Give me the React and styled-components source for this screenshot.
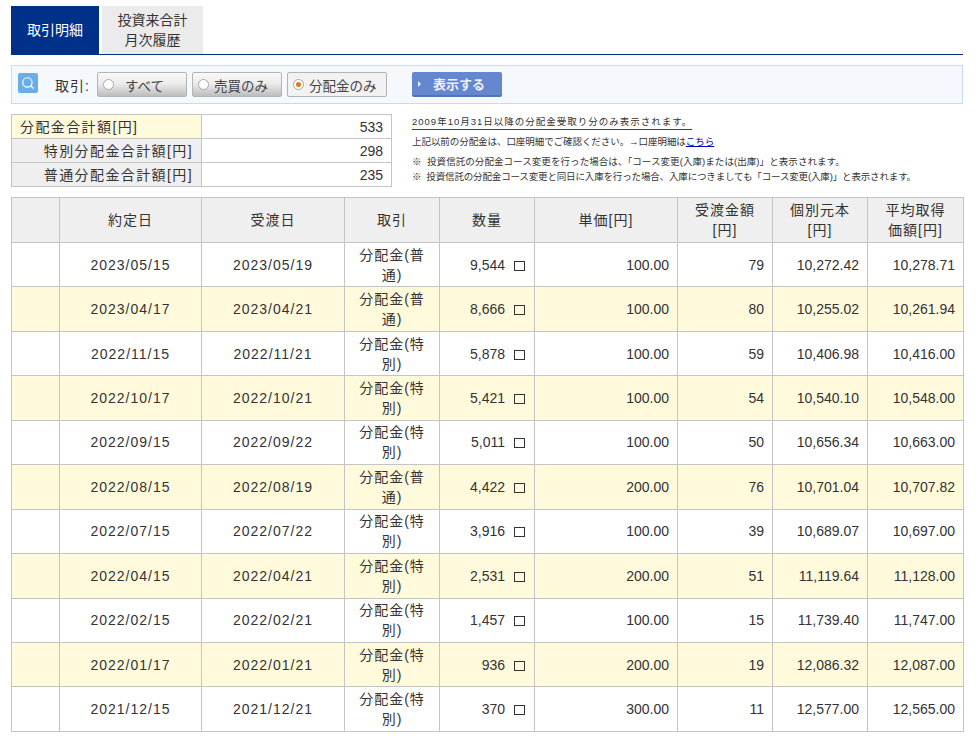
import styled, { createGlobalStyle } from "styled-components";
import { Search } from "lucide-react";

const Global = createGlobalStyle`
  html, body { margin: 0; padding: 0; background: #fff; }
  body {
    font-family: "Liberation Sans", "Noto Sans CJK JP", sans-serif;
    font-size: 14px;
    color: #333;
    overflow: hidden;
  }
`;

const Page = styled.div`
  width: 952px;
  padding: 6px 14px 0 11px;
`;

const Tabs = styled.div`
  display: flex;
  gap: 3px;
  height: 48px;
  border-bottom: 1px solid #00318a;
`;

const Tab = styled.div`
  width: ${(p) => p.$w}px;
  display: flex;
  align-items: center;
  justify-content: center;
  text-align: center;
  line-height: 20px;
  font-size: 14px;
  background: ${(p) => (p.$active ? "#00318a" : "#ebebeb")};
  color: ${(p) => (p.$active ? "#fff" : "#333")};
`;

const SearchBar = styled.div`
  box-sizing: border-box;
  height: 39px;
  margin-top: 10px;
  display: flex;
  align-items: center;
  padding: 0 6px;
  background: #f5f9fd;
  border: 1px solid #c6dcee;
`;

const IconBox = styled.div`
  width: 20px;
  height: 20px;
  margin-top: -4px;
  border-radius: 2px;
  background: #6aaee8;
  display: flex;
  align-items: center;
  justify-content: center;
  color: #fff;
`;

const BarLabel = styled.span`
  margin-left: 17px;
  margin-right: 7px;
  letter-spacing: 1px;
  white-space: nowrap;
`;

const Choice = styled.div`
  box-sizing: border-box;
  width: ${(p) => p.$w}px;
  height: 25px;
  margin-right: 5px;
  display: flex;
  align-items: center;
  padding-left: 5px;
  font-size: 13.5px;
  color: #444;
  border: 1px solid #b4b4b4;
  border-radius: 2px;
  background: ${(p) =>
    p.$on ? "#f2f2f2" : "linear-gradient(#f8f8f8 0%, #ececec 45%, #bdbdbd 100%)"};
`;

const Radio = styled.span`
  box-sizing: border-box;
  width: 11px;
  height: 11px;
  border-radius: 50%;
  border: 1px solid #a8a8a8;
  background: #fff;
  margin-right: ${(p) => p.$gap}px;
  flex: none;
  display: flex;
  align-items: center;
  justify-content: center;
  &::after {
    content: "";
    display: ${(p) => (p.$on ? "block" : "none")};
    width: 5px;
    height: 5px;
    border-radius: 50%;
    background: #e07b10;
  }
`;

const ShowButton = styled.div`
  box-sizing: border-box;
  width: 90px;
  height: 25px;
  margin-left: 20px;
  display: flex;
  align-items: center;
  padding-left: 6px;
  gap: 12px;
  border-radius: 2px;
  background: #6487cf;
  border-bottom: 2px solid #5574b4;
  color: #eef2fb;
  font-size: 13px;
  font-weight: 700;
  &::before {
    content: "";
    border-left: 3px solid #eef2fb;
    border-top: 3px solid transparent;
    border-bottom: 3px solid transparent;
  }
`;

const Summary = styled.div`
  display: flex;
  margin-top: 10px;
  height: 83px;
`;

const TotalsTable = styled.table`
  width: 381px;
  height: 73px;
  border-collapse: collapse;
  table-layout: fixed;
  td {
    border: 1px solid #c4c4c4;
    padding: 0 8px;
    line-height: 16px;
  }
`;

const TotalLabel = styled.td`
  width: 173px;
  letter-spacing: 1.4px;
  white-space: nowrap;
  text-align: ${(p) => (p.$main ? "left" : "right")};
  background: ${(p) => (p.$main ? "#fffadc" : "#efefef")};
`;

const TotalValue = styled.td`
  text-align: right;
`;

const Notes = styled.div`
  margin-left: 20px;
  font-size: 9.5px;
  line-height: 14px;
  padding-top: 1px;
`;

const Lead = styled.div`
  display: inline-block;
  border-bottom: 1px solid #d80000;
  margin-bottom: 5px;
  letter-spacing: 1px;
`;

const NoteLine = styled.div`
  margin-bottom: ${(p) => p.$mb || 0}px;
  letter-spacing: ${(p) => p.$ls || 0}px;
  white-space: pre;
`;

const Link = styled.span`
  color: #0000c8;
  text-decoration: underline;
`;

const TradeTable = styled.table`
  width: 952px;
  border-collapse: collapse;
  table-layout: fixed;
  letter-spacing: 1px;
  th, td {
    border: 1px solid #c4c4c4;
    font-weight: 400;
    line-height: 20px;
    box-sizing: border-box;
  }
  th {
    height: 45px;
    background: #efefef;
    text-align: center;
    padding: 0;
  }
`;

const Row = styled.tr`
  height: 44.45px;
  background: ${(p) => (p.$alt ? "#fffadc" : "#fff")};
`;

const Cell = styled.td`
  text-align: center;
  padding: 0;
`;

const TradeCell = styled.td`
  text-align: center;
  padding: 0 14px;
`;

const NumCell = styled.td`
  text-align: right;
  padding: 0 8px 0 0;
  letter-spacing: 0;
`;

const Box = styled.span`
  display: inline-block;
  box-sizing: border-box;
  width: 11px;
  height: 10px;
  margin-left: 9px;
  margin-right: 1px;
  border: 1px solid #333;
  vertical-align: -1px;
`;

const rows = [
  ["2023/05/15", "2023/05/19", "分配金(普通)", "9,544", "100.00", "79", "10,272.42", "10,278.71"],
  ["2023/04/17", "2023/04/21", "分配金(普通)", "8,666", "100.00", "80", "10,255.02", "10,261.94"],
  ["2022/11/15", "2022/11/21", "分配金(特別)", "5,878", "100.00", "59", "10,406.98", "10,416.00"],
  ["2022/10/17", "2022/10/21", "分配金(特別)", "5,421", "100.00", "54", "10,540.10", "10,548.00"],
  ["2022/09/15", "2022/09/22", "分配金(特別)", "5,011", "100.00", "50", "10,656.34", "10,663.00"],
  ["2022/08/15", "2022/08/19", "分配金(普通)", "4,422", "200.00", "76", "10,701.04", "10,707.82"],
  ["2022/07/15", "2022/07/22", "分配金(特別)", "3,916", "100.00", "39", "10,689.07", "10,697.00"],
  ["2022/04/15", "2022/04/21", "分配金(特別)", "2,531", "200.00", "51", "11,119.64", "11,128.00"],
  ["2022/02/15", "2022/02/21", "分配金(特別)", "1,457", "100.00", "15", "11,739.40", "11,747.00"],
  ["2022/01/17", "2022/01/21", "分配金(特別)", "936", "200.00", "19", "12,086.32", "12,087.00"],
  ["2021/12/15", "2021/12/21", "分配金(特別)", "370", "300.00", "11", "12,577.00", "12,565.00"],
];

const colWidths = [48, 142, 143, 95, 95, 143, 95, 95, 96];

export default function App() {
  return (
    <Page>
      <Global />
      <Tabs>
        <Tab $active $w={88}>取引明細</Tab>
        <Tab $w={101}>投資来合計<br />月次履歴</Tab>
      </Tabs>

      <SearchBar>
        <IconBox><Search size={14} strokeWidth={2} /></IconBox>
        <BarLabel>取引:</BarLabel>
        <Choice $w={90}><Radio $gap={11} />すべて</Choice>
        <Choice $w={90}><Radio $gap={5} />売買のみ</Choice>
        <Choice $w={100} $on><Radio $on $gap={5} />分配金のみ</Choice>
        <ShowButton>表示する</ShowButton>
      </SearchBar>

      <Summary>
        <TotalsTable>
          <tbody>
            <tr><TotalLabel $main>分配金合計額[円]</TotalLabel><TotalValue>533</TotalValue></tr>
            <tr><TotalLabel>特別分配金合計額[円]</TotalLabel><TotalValue>298</TotalValue></tr>
            <tr><TotalLabel>普通分配金合計額[円]</TotalLabel><TotalValue>235</TotalValue></tr>
          </tbody>
        </TotalsTable>
        <Notes>
          <Lead>2009年10月31日以降の分配金受取り分のみ表示されます。</Lead>
          <NoteLine $mb={6} $ls={-0.06}>上記以前の分配金は、口座明細でご確認ください。→口座明細は<Link>こちら</Link></NoteLine>
          <NoteLine $mb={1} $ls={0.07}>{"※  投資信託の分配金コース変更を行った場合は、「コース変更(入庫)または(出庫)」と表示されます。"}</NoteLine>
          <NoteLine $ls={-0.15}>{"※  投資信託の分配金コース変更と同日に入庫を行った場合、入庫につきましても「コース変更(入庫)」と表示されます。"}</NoteLine>
        </Notes>
      </Summary>

      <TradeTable>
        <colgroup>
          {colWidths.map((w, i) => <col key={i} width={w} />)}
        </colgroup>
        <thead>
          <tr>
            <th></th>
            <th>約定日</th>
            <th>受渡日</th>
            <th>取引</th>
            <th>数量</th>
            <th>単価[円]</th>
            <th>受渡金額<br />[円]</th>
            <th>個別元本<br />[円]</th>
            <th>平均取得<br />価額[円]</th>
          </tr>
        </thead>
        <tbody>
          {rows.map((r, i) => (
            <Row key={r[0]} $alt={i % 2 === 1}>
              <Cell />
              <Cell>{r[0]}</Cell>
              <Cell>{r[1]}</Cell>
              <TradeCell>{r[2]}</TradeCell>
              <NumCell>{r[3]}<Box /></NumCell>
              <NumCell>{r[4]}</NumCell>
              <NumCell>{r[5]}</NumCell>
              <NumCell>{r[6]}</NumCell>
              <NumCell>{r[7]}</NumCell>
            </Row>
          ))}
        </tbody>
      </TradeTable>
    </Page>
  );
}
